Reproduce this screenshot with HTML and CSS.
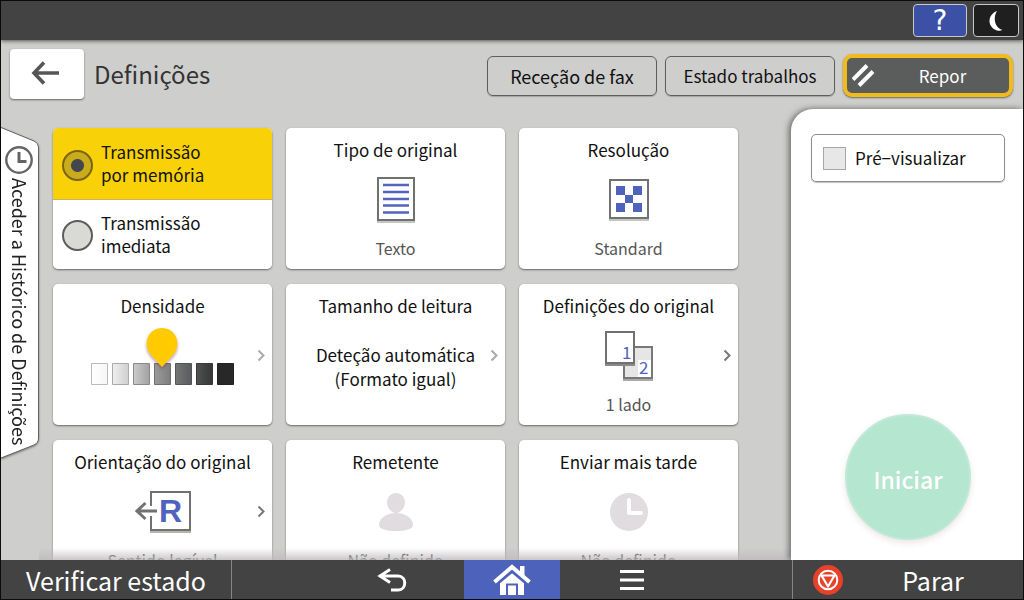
FILE: index.html
```html
<!DOCTYPE html>
<html lang="pt">
<head>
<meta charset="utf-8">
<meta name="viewport" content="width=device-width, initial-scale=1">
<title>Definições</title>
<link rel="stylesheet" href="styles.css">
</head>
<body>
<div class="screen">
  <div class="topbar">
    <button class="key key-help" type="button" aria-label="Ajuda">?</button>
    <button class="key key-sleep" type="button" aria-label="Poupança de energia">
      <svg width="14" height="22" viewBox="0 0 14 22"><path d="M8 1C-2 5-2 17 8 20.500Q11 21.200 13.500 20C5 17.500 4 7 8 1Z" fill="#fff"/></svg>
    </button>
  </div>

  <header class="header">
    <button class="back" type="button" aria-label="Voltar">
      <svg width="28" height="24" viewBox="0 0 28 24" fill="none" stroke="#555756" stroke-width="3.600"><path d="M28 12H3M13 1.500L3 12l10 10.500"/></svg>
    </button>
    <h1 class="title">Definições</h1>
    <div class="actions">
      <button class="action action-wide-text" type="button">Receção de fax</button>
      <button class="action" type="button">Estado trabalhos</button>
      <button class="reset" type="button">
        <svg width="24" height="24" viewBox="0 0 24 24" stroke="#fff" stroke-width="4"><path d="M1 15.500L15 1.500M7 21.500L21 7.500"/></svg>
        <span>Repor</span>
      </button>
    </div>
  </header>

  <main class="main">
    <button class="history" type="button">
      <svg class="history-shape" viewBox="0 0 38 332" preserveAspectRatio="none"><path d="M0 .5L33 14Q37.500 16 37.500 20V311Q37.500 316 33 318L0 331" fill="#fff" stroke="#626262"/></svg>
      <svg class="history-clock" width="28" height="28" viewBox="0 0 28 28" fill="none" stroke="#646464"><circle cx="14" cy="14" r="12.700" stroke-width="2.400"/><path d="M14 6v9.500h7.500" stroke-width="3"/></svg>
      <span class="history-text">Aceder a Histórico de Definições</span>
    </button>

    <section class="cards">
      <fieldset class="card modes">
        <label class="mode"><input class="radio" type="radio" name="mode" checked><span>Transmissão<br>por memória</span></label>
        <label class="mode"><input class="radio" type="radio" name="mode"><span>Transmissão<br>imediata</span></label>
      </fieldset>

      <button class="card" type="button">
        <span class="card-title">Tipo de original</span>
        <span class="card-body">
          <svg width="38" height="46" viewBox="0 0 38 46"><path d="M0 42h38v4H0z" fill="#c4c6c4"/><path d="M1 1h36v42H1z" fill="#fff" stroke="#70726f" stroke-width="2"/><path d="M6 8h26M6 15h26M6 22h26M6 28.500h26M6 35.500h26" stroke="#5264bb" stroke-width="2.400"/></svg>
        </span>
        <span class="card-value">Texto</span>
      </button>

      <button class="card" type="button">
        <span class="card-title">Resolução</span>
        <span class="card-body">
          <svg width="40" height="42" viewBox="0 0 40 42"><path d="M0 38h40v4H0z" fill="#c4c6c4"/><path d="M1 1h38v38H1z" fill="#fff" stroke="#70726f" stroke-width="2"/><path d="M7 7h9v9H7zM24 7h9v9h-9zM16 16h8v8h-8zM7 24h9v9H7zM24 24h9v9h-9z" fill="#4f63bc"/></svg>
        </span>
        <span class="card-value">Standard</span>
      </button>

      <button class="card" type="button">
        <span class="card-title">Densidade</span>
        <span class="card-body">
          <svg width="144" height="60" viewBox="0 0 144 60">
            <defs>
              <linearGradient id="d1"><stop stop-color="#fff"/><stop offset="1" stop-color="#f7f5f5"/></linearGradient>
              <linearGradient id="d2"><stop stop-color="#f0efef"/><stop offset="1" stop-color="#cfcfcf"/></linearGradient>
              <linearGradient id="d3"><stop stop-color="#cacaca"/><stop offset="1" stop-color="#a2a2a2"/></linearGradient>
              <linearGradient id="d4"><stop stop-color="#9b9b9b"/><stop offset="1" stop-color="#7c7e7e"/></linearGradient>
              <linearGradient id="d5"><stop stop-color="#747676"/><stop offset="1" stop-color="#5a5b5c"/></linearGradient>
              <linearGradient id="d6"><stop stop-color="#505152"/><stop offset="1" stop-color="#363636"/></linearGradient>
              <filter id="pin" x="-20%" y="-20%" width="140%" height="150%"><feDropShadow dx="0" dy="2" stdDeviation="1.500" flood-color="#703050" flood-opacity=".5"/></filter>
            </defs>
            <g stroke-width="1">
              <path d="M.5 37.500h16v21H.5z" fill="url(#d1)" stroke="#bbb"/>
              <path d="M21.500 37.500h16v21h-16z" fill="url(#d2)" stroke="#aaa"/>
              <path d="M42.500 37.500h16v21h-16z" fill="url(#d3)" stroke="#898989"/>
              <path d="M63.500 37.500h16v21h-16z" fill="url(#d4)" stroke="#6e6e6e"/>
              <path d="M84.500 37.500h16v21h-16z" fill="url(#d5)" stroke="#555"/>
              <path d="M105.500 37.500h16v21h-16z" fill="url(#d6)" stroke="#383838"/>
              <path d="M126.500 37.500h16v21h-16z" fill="#282828" stroke="#222"/>
            </g>
            <path d="M59.500 28.500C51 18 57 2 71 2s20 16 11.500 26.500L71 41Z" fill="#ffcb05" filter="url(#pin)"/>
          </svg>
        </span>
        <svg class="chevron chevron-dim" width="8" height="13" viewBox="0 0 8 13"><path d="M1.500 1.500l5 5-5 5"/></svg>
      </button>

      <button class="card" type="button">
        <span class="card-title">Tamanho de leitura</span>
        <span class="card-body card-body-text">Deteção automática<br>(Formato igual)</span>
        <svg class="chevron chevron-dim" width="8" height="13" viewBox="0 0 8 13"><path d="M1.500 1.500l5 5-5 5"/></svg>
      </button>

      <button class="card" type="button">
        <span class="card-title">Definições do original</span>
        <span class="card-body">
          <svg width="48" height="50" viewBox="0 0 48 50"><path d="M18 46h30v4H18z" fill="#aaa"/><path d="M19 16h28v31H19z" fill="#e6e6e7" stroke="#777976" stroke-width="2"/><path d="M33 29h13v17H33z" fill="#fff"/><path d="M0 31h30v4H0z" fill="#898989"/><path d="M1 1h28v31H1z" fill="#fff" stroke="#70726f" stroke-width="2"/><text class="sheet-number" x="17" y="28">1</text><text class="sheet-number" x="34" y="43">2</text></svg>
        </span>
        <span class="card-value">1 lado</span>
        <svg class="chevron" width="8" height="13" viewBox="0 0 8 13"><path d="M1.500 1.500l5 5-5 5"/></svg>
      </button>

      <button class="card" type="button">
        <span class="card-title">Orientação do original</span>
        <span class="card-body">
          <svg width="56" height="42" viewBox="0 0 56 42"><path d="M15 38h41v4H15z" fill="#b4b6b4"/><path d="M16 1h39v38H16z" fill="#fff" stroke="#70726f" stroke-width="2"/><path d="M14 15h4v10h-4z" fill="#fff"/><path d="M22 20H2M10.500 12L2 20l8.500 8" fill="none" stroke="#70726f" stroke-width="3"/><text class="sheet-letter" x="24" y="31">R</text></svg>
        </span>
        <span class="card-value">Sentido legível</span>
        <svg class="chevron" width="8" height="13" viewBox="0 0 8 13"><path d="M1.500 1.500l5 5-5 5"/></svg>
      </button>

      <button class="card" type="button">
        <span class="card-title">Remetente</span>
        <span class="card-body">
          <svg width="34" height="38" viewBox="0 0 34 38" fill="#e0dce0"><path d="M17 0c5 0 9 4 9 9.500S21.500 20 17 20 8 15 8 9.500 12 0 17 0Z"/><path d="M17 20c10 0 17 6 17 12 0 4-8 6-17 6S0 36 0 32c0-6 7-12 17-12Z"/></svg>
        </span>
        <span class="card-value">Não definido</span>
      </button>

      <button class="card" type="button">
        <span class="card-title">Enviar mais tarde</span>
        <span class="card-body">
          <svg width="38" height="38" viewBox="0 0 38 38"><circle cx="19" cy="19" r="19" fill="#e0dce0"/><path d="M19 7v13h12" fill="none" stroke="#fff" stroke-width="4" stroke-linecap="round" stroke-linejoin="round"/></svg>
        </span>
        <span class="card-value">Não definido</span>
      </button>
    </section>

    <aside class="panel">
      <label class="preview"><input class="check" type="checkbox"><span>Pré−visualizar</span></label>
      <button class="start" type="button">Iniciar</button>
    </aside>
  </main>

  <footer class="footer">
    <button class="foot foot-status" type="button">Verificar estado</button>
    <nav class="nav">
      <button class="foot foot-nav" type="button" aria-label="Anterior">
        <svg width="32" height="24" viewBox="0 0 32 24" fill="none" stroke="#fff" stroke-width="3"><path d="M3 8h19c9 0 9 14 0 14h-7M14 1.500L4 8l10 6.500"/></svg>
      </button>
      <button class="foot foot-nav foot-home" type="button" aria-label="Início">
        <svg width="38" height="32" viewBox="0 0 38 32"><path d="M27 2h4.500v11L27 9z" fill="#fff"/><path d="M7 18L19 8l12 10v13H7z" fill="#fff"/><path d="M4 20.500L19 8l15 12.500" fill="none" stroke="#4d63bb" stroke-width="2"/><path d="M1.500 18L19 3l17.500 15" fill="none" stroke="#fff" stroke-width="4"/><path d="M14 31V20.500h10V31" fill="none" stroke="#4d63bb" stroke-width="2"/></svg>
      </button>
      <button class="foot foot-nav" type="button" aria-label="Menu">
        <svg width="24" height="20" viewBox="0 0 24 20" stroke="#fff" stroke-width="3"><path d="M0 1.500h24M0 10h24M0 18.500h24"/></svg>
      </button>
    </nav>
    <button class="foot foot-stop" type="button">
      <svg width="30" height="30" viewBox="0 0 30 30" fill="none" stroke="#fff"><circle cx="15" cy="15" r="15" fill="#e8412a" stroke="none"/><circle cx="15" cy="15" r="9.300" stroke-width="2"/><path d="M8.500 10.500h13L15 21.500z" stroke-width="2.200" stroke-linejoin="round"/></svg>
      <span>Parar</span>
    </button>
  </footer>
</div>
</body>
</html>
```
FILE: styles.css
```css
* {
  box-sizing: border-box;
}

body {
  margin: 0;
  background: #000;
  color: #111;
  font: 17px/24px "Noto Sans CJK JP", "Noto Sans", sans-serif;
}

button {
  margin: 0;
  padding: 0;
  border: 0;
  background: none;
  color: inherit;
  font: inherit;
  cursor: pointer;
}

svg {
  display: block;
  flex: none;
}

.screen {
  display: grid;
  grid-template-rows: auto auto minmax(0, 1fr) auto;
  height: 100vh;
  border: 1px solid #0c0c0c;
  background: #cececd;
}

/* Top bar */

.topbar {
  z-index: 1;
  display: flex;
  justify-content: flex-end;
  gap: 6px;
  padding: 3px 4px;
  background: #434344;
  box-shadow: 0 1px 4px rgba(0, 0, 0, .6);
}

.key {
  display: flex;
  align-items: center;
  justify-content: center;
  height: 33px;
  border: 1px solid #c9c9c9;
  border-radius: 4px;
}

.key-help {
  width: 54px;
  background: #3c51a5;
  color: #fff;
  font-family: "DejaVu Sans", sans-serif;
  font-size: 28px;
}

.key-sleep {
  width: 46px;
  background: #1f1f1f;
}

/* Header */

.header {
  display: flex;
  align-items: center;
  gap: 10px;
  padding: 9px 10px 9px 9px;
}

.back {
  display: flex;
  align-items: center;
  justify-content: center;
  width: 74px;
  height: 50px;
  padding-right: 4px;
  padding-bottom: 2px;
  border-radius: 4px;
  background: #fff;
  box-shadow: 0 1px 2px rgba(0, 0, 0, .5);
}

.title {
  flex: 1;
  margin: 0;
  color: #333;
  font-size: 24px;
  font-weight: 400;
  line-height: 32px;
}

.actions {
  display: flex;
  align-items: center;
  gap: 8px;
  padding-top: 3px;
}

.action {
  width: 170px;
  height: 40px;
  border: 1px solid #5d5f5e;
  border-radius: 6px;
  box-shadow: 0 1px 1px rgba(0, 0, 0, .2);
}

.action-wide-text {
  font-size: 18px;
}

.reset {
  display: flex;
  align-items: center;
  width: 170px;
  height: 43px;
  padding-left: 5px;
  border: 4px solid #f2bb1d;
  border-radius: 9px;
  background: #5a5d5b;
  box-shadow: 0 1px 2px rgba(0, 0, 0, .5);
  color: #fff;
}

.reset span {
  flex: 1;
}

/* Main area */

.main {
  display: grid;
  grid-template-columns: 38px minmax(0, 1fr) 232px;
  min-height: 0;
}

.history {
  position: relative;
  display: flex;
  flex-direction: column;
  align-items: center;
  align-self: start;
  gap: 4px;
  height: 332px;
  margin-top: 19px;
  padding-top: 19px;
  filter: drop-shadow(0 1px 1px rgba(0, 0, 0, .4));
}

.history-shape {
  position: absolute;
  inset: 0;
  width: 100%;
  height: 100%;
}

.history-clock,
.history-text {
  z-index: 1;
}

.history-clock {
  margin-right: 2px;
}

.history-text {
  color: #222;
  writing-mode: vertical-rl;
  white-space: nowrap;
  font-size: 18px;
  line-height: 24px;
}

.cards {
  position: relative;
  display: grid;
  grid-template-columns: repeat(3, minmax(0, 1fr));
  grid-auto-rows: 141px;
  gap: 15px 14px;
  padding: 20px 53px 0 14px;
  overflow: hidden;
}

.cards::after {
  content: "";
  position: absolute;
  inset: auto 0 0;
  height: 12px;
  background: linear-gradient(rgba(190, 185, 188, 0), rgba(190, 185, 188, .8));
}

.card {
  position: relative;
  display: grid;
  grid-template-rows: 24px 76px 20px;
  min-width: 0;
  padding-top: 10px;
  border-radius: 5px;
  background: #fff;
  box-shadow: 0 1px 2px rgba(0, 0, 0, .5);
  text-align: center;
}

.card-title {
  white-space: nowrap;
}

.card-body {
  display: grid;
  place-content: center;
}

.card-body-text {
  padding-top: 22px;
}

.card-value {
  color: #555;
  font-size: 16px;
  line-height: 20px;
}

.chevron {
  position: absolute;
  top: 65px;
  right: 7px;
  fill: none;
  stroke: #777;
  stroke-width: 2;
}

.chevron-dim {
  stroke: #aaa;
}

.sheet-number {
  fill: #4f63bc;
  font-size: 17px;
}

.sheet-letter {
  fill: #4f63bc;
  font: bold 32px "Liberation Sans", sans-serif;
}

.modes {
  grid-template-rows: 72px 69px;
  margin: 0;
  padding: 0;
  border: 0;
  overflow: hidden;
  text-align: left;
}

.mode {
  display: flex;
  align-items: center;
  gap: 8px;
  padding: 0 0 2px 9px;
  line-height: 23px;
}

.mode:has(:checked) {
  background: #f8d109;
  box-shadow: inset 0 -1px #c9b45a;
}

.radio {
  flex: none;
  appearance: none;
  width: 31px;
  height: 31px;
  margin: 4px 0 0;
  border: 2px solid #5c5c5a;
  border-radius: 50%;
  background: #d9d9d6;
}

.radio:checked {
  border-color: #7a6413;
  background: radial-gradient(circle, #44464d 6px, #c9ab1b 7px);
}

/* Side panel */

.panel {
  display: flex;
  flex-direction: column;
  align-items: center;
  justify-content: space-between;
  margin-top: 1px;
  padding: 25px 18px 20px 20px;
  border-radius: 22px 0 0;
  background: #fff;
  box-shadow: -2px 0 6px rgba(0, 0, 0, .5);
  clip-path: inset(-10px 0 0 -12px);
}

.preview {
  display: flex;
  align-items: center;
  gap: 9px;
  width: 100%;
  height: 48px;
  padding-left: 11px;
  border: 1px solid #8d8d8d;
  border-radius: 5px;
  box-shadow: 0 1px 1px rgba(0, 0, 0, .25);
  white-space: nowrap;
}

.check {
  flex: none;
  appearance: none;
  width: 23px;
  height: 23px;
  margin: 0;
  border: 1px solid #a6a6a6;
  background: #e7e7e7;
}

.start {
  width: 126px;
  height: 126px;
  padding-top: 4px;
  border: 2px solid #c2e8d8;
  border-radius: 50%;
  background: #b5e6d0;
  box-shadow: 0 3px 6px rgba(100, 40, 60, .12);
  color: #fff;
  font-size: 23px;
  font-weight: 500;
}

/* Footer */

.footer {
  z-index: 1;
  display: grid;
  grid-template-columns: 231px 1fr 231px;
  height: 39px;
  background: #434344;
  color: #fff;
  font-size: 25px;
}

.foot {
  display: flex;
  align-items: center;
  justify-content: center;
}

.foot-status {
  border-right: 1px solid #858585;
}

.foot-stop {
  padding-left: 20px;
  border-left: 1px solid #858585;
}

.foot-stop span {
  flex: 1;
}

.nav {
  display: flex;
  justify-content: center;
  gap: 24px;
}

.foot-nav {
  width: 96px;
}

.foot-home {
  background: #4d63bb;
}
```
